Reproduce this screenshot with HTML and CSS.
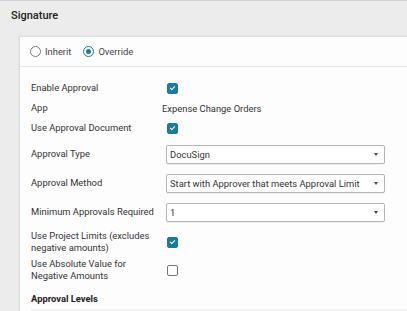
FILE: index.html
```html
<!DOCTYPE html>
<html lang="en">
  <head>
    <meta charset="UTF-8" />
    <meta name="viewport" content="width=device-width, initial-scale=1.0" />
    <title>Signature</title>
    <link rel="stylesheet" href="styles.css">
  </head>
  <body>
    <div class="page">
      <h3 class="page-title">Signature</h3>
      <div class="card">
        <div class="card-header">
          <label class="radio"><span class="radio-dot"></span>Inherit</label>
          <label class="radio"><span class="radio-dot checked"></span>Override</label>
        </div>
        <div class="form">
          <div class="row">
            <div class="label">Enable Approval</div>
            <span class="check checked"></span>
          </div>
          <div class="row">
            <div class="label">App</div>
            <div class="value">Expense Change Orders</div>
          </div>
          <div class="row">
            <div class="label">Use Approval Document</div>
            <span class="check checked"></span>
          </div>
          <div class="row row-field first">
            <div class="label">Approval Type</div>
            <div class="select">DocuSign<span class="caret"></span></div>
          </div>
          <div class="row row-field">
            <div class="label">Approval Method</div>
            <div class="select">Start with Approver that meets Approval Limit<span class="caret"></span></div>
          </div>
          <div class="row row-field">
            <div class="label">Minimum Approvals Required</div>
            <div class="select">1<span class="caret"></span></div>
          </div>
          <div class="row row-wrap">
            <div class="label">Use Project Limits (excludes negative amounts)</div>
            <span class="check checked"></span>
          </div>
          <div class="row row-wrap second">
            <div class="label">Use Absolute Value for Negative Amounts</div>
            <span class="check"></span>
          </div>
          <div class="section-title">Approval Levels</div>
          <div class="table-head"></div>
        </div>
      </div>
    </div>
  </body>
</html>
```

FILE: styles.css
```css
body {
  margin: 0;
  font-family: Roboto, "Liberation Sans", sans-serif;
  font-size: 9.4px;
  color: #333;
}
.page {
  display: flex;
  flex-direction: column;
  height: 310px;
  overflow: hidden;
  background-color: #ececec;
  border-top: 1px solid #d2d2d2;
}
.page-title {
  margin: 0;
  padding: 8px 11px 0;
  font-size: 11px;
  font-weight: 500;
  line-height: 14px;
  color: #222;
}
.card {
  flex: 1;
  margin: 13px 0 0 19px;
  background-color: #fdfdfd;
  border: 1px solid #dcdcdc;
  border-right: none;
  border-bottom: none;
  box-shadow: 0 0 2px rgba(0, 0, 0, 0.08);
}
.card-header {
  display: flex;
  align-items: center;
  gap: 12px;
  height: 29px;
  padding-left: 10px;
  border-bottom: 1px solid #e4e4e4;
}
.radio {
  display: flex;
  align-items: center;
  gap: 4px;
  color: #444;
}
.radio-dot {
  width: 9px;
  height: 9px;
  border: 1px solid #7a7a7a;
  border-radius: 50%;
  background-color: #fff;
  position: relative;
}
.radio-dot.checked {
  border-color: #1a7b9c;
}
.radio-dot.checked::after {
  content: "";
  position: absolute;
  left: 2px;
  top: 2px;
  width: 5px;
  height: 5px;
  border-radius: 50%;
  background-color: #1a7b9c;
}
.form {
  padding: 11px 0 0 11px;
}
.row {
  display: flex;
  align-items: center;
  height: 20px;
}
.label {
  width: 131px;
  flex-shrink: 0;
  line-height: 12px;
}
.check {
  width: 9px;
  height: 9px;
  margin-left: 5px;
  border: 1px solid #777;
  border-radius: 2px;
  background-color: #fff;
  position: relative;
}
.check.checked {
  border-color: #1a7b9c;
  background-color: #1a7b9c;
}
.check.checked::after {
  content: "";
  position: absolute;
  left: 2px;
  top: 2px;
  width: 4px;
  height: 2px;
  border-left: 1.5px solid #fff;
  border-bottom: 1.5px solid #fff;
  transform: rotate(-45deg);
}
.row-field {
  margin-top: 9px;
}
.row-field.first {
  margin-top: 6px;
}
.select {
  display: flex;
  align-items: center;
  justify-content: space-between;
  width: 208px;
  height: 17px;
  margin-left: 4px;
  padding: 0 6px 0 3px;
  border: 1px solid #b5b5b5;
  border-radius: 2px;
  background-color: #fff;
  box-shadow: 0 1px 1px rgba(0, 0, 0, 0.06);
}
.caret {
  width: 0;
  height: 0;
  border-left: 2.5px solid transparent;
  border-right: 2.5px solid transparent;
  border-top: 3px solid #444;
}
.row-wrap {
  height: 24px;
  margin-top: 8px;
}
.row-wrap.second {
  margin-top: 4px;
}
.row-wrap .label {
  width: 128px;
  margin-right: 3px;
}
.section-title {
  margin-top: 10px;
  height: 14px;
  line-height: 14px;
  font-weight: 700;
  color: #222;
}
.table-head {
  margin-top: 3px;
  height: 10px;
  background-color: #f2f2f2;
}
```
